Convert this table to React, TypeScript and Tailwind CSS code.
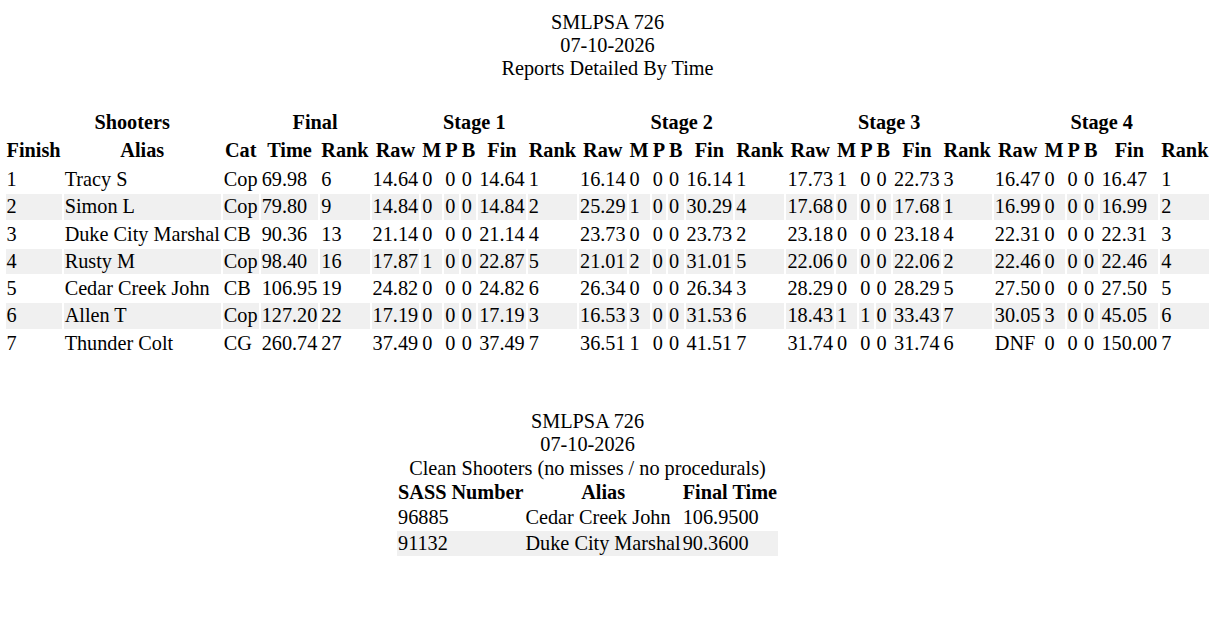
import React from 'react';

type Stage = [string, string, string, string, string, string];

type Shooter = {
  finish: string;
  alias: string;
  cat: string;
  time: string;
  rank: string;
  stages: Stage[];
};

const shooters: Shooter[] = [
  {
    finish: '1', alias: 'Tracy S', cat: 'Cop', time: '69.98', rank: '6',
    stages: [
      ['14.64', '0', '0', '0', '14.64', '1'],
      ['16.14', '0', '0', '0', '16.14', '1'],
      ['17.73', '1', '0', '0', '22.73', '3'],
      ['16.47', '0', '0', '0', '16.47', '1'],
    ],
  },
  {
    finish: '2', alias: 'Simon L', cat: 'Cop', time: '79.80', rank: '9',
    stages: [
      ['14.84', '0', '0', '0', '14.84', '2'],
      ['25.29', '1', '0', '0', '30.29', '4'],
      ['17.68', '0', '0', '0', '17.68', '1'],
      ['16.99', '0', '0', '0', '16.99', '2'],
    ],
  },
  {
    finish: '3', alias: 'Duke City Marshal', cat: 'CB', time: '90.36', rank: '13',
    stages: [
      ['21.14', '0', '0', '0', '21.14', '4'],
      ['23.73', '0', '0', '0', '23.73', '2'],
      ['23.18', '0', '0', '0', '23.18', '4'],
      ['22.31', '0', '0', '0', '22.31', '3'],
    ],
  },
  {
    finish: '4', alias: 'Rusty M', cat: 'Cop', time: '98.40', rank: '16',
    stages: [
      ['17.87', '1', '0', '0', '22.87', '5'],
      ['21.01', '2', '0', '0', '31.01', '5'],
      ['22.06', '0', '0', '0', '22.06', '2'],
      ['22.46', '0', '0', '0', '22.46', '4'],
    ],
  },
  {
    finish: '5', alias: 'Cedar Creek John', cat: 'CB', time: '106.95', rank: '19',
    stages: [
      ['24.82', '0', '0', '0', '24.82', '6'],
      ['26.34', '0', '0', '0', '26.34', '3'],
      ['28.29', '0', '0', '0', '28.29', '5'],
      ['27.50', '0', '0', '0', '27.50', '5'],
    ],
  },
  {
    finish: '6', alias: 'Allen T', cat: 'Cop', time: '127.20', rank: '22',
    stages: [
      ['17.19', '0', '0', '0', '17.19', '3'],
      ['16.53', '3', '0', '0', '31.53', '6'],
      ['18.43', '1', '1', '0', '33.43', '7'],
      ['30.05', '3', '0', '0', '45.05', '6'],
    ],
  },
  {
    finish: '7', alias: 'Thunder Colt', cat: 'CG', time: '260.74', rank: '27',
    stages: [
      ['37.49', '0', '0', '0', '37.49', '7'],
      ['36.51', '1', '0', '0', '41.51', '7'],
      ['31.74', '0', '0', '0', '31.74', '6'],
      ['DNF', '0', '0', '0', '150.00', '7'],
    ],
  },
];

const clean = [
  { sass: '96885', alias: 'Cedar Creek John', time: '106.9500' },
  { sass: '91132', alias: 'Duke City Marshal', time: '90.3600' },
];

const stageCols = ['Raw', 'M', 'P', 'B', 'Fin', 'Rank'];

export default function App() {
  return (
    <div className="w-[1215px] bg-white pt-[10.5px] text-[20.25px] leading-[23.3px] text-black font-['Liberation_Serif','Times_New_Roman',serif]">
      {/* Detailed report */}
      <div className="text-center">
        <div>SMLPSA 726</div>
        <div>07-10-2026</div>
        <div>Reports Detailed By Time</div>
      </div>

      <table className="mx-auto mt-[28px] border-separate border-spacing-[2px]">
        <thead>
          <tr>
            <th colSpan={3} className="p-px">Shooters</th>
            <th colSpan={2} className="p-px">Final</th>
            {[1, 2, 3, 4].map((n) => (
              <th key={n} colSpan={6} className="p-px">Stage {n}</th>
            ))}
          </tr>
          <tr>
            <th className="px-px pt-[1.5px] pb-[2.5px]">Finish</th>
            <th className="px-px pt-[1.5px] pb-[2.5px]">Alias</th>
            <th className="px-px pt-[1.5px] pb-[2.5px]">Cat</th>
            <th className="px-px pt-[1.5px] pb-[2.5px]">Time</th>
            <th className="px-px pt-[1.5px] pb-[2.5px]">Rank</th>
            {[1, 2, 3, 4].map((n) =>
              stageCols.map((c) => (
                <th key={`${n}-${c}`} className="px-px pt-[1.5px] pb-[2.5px]">{c}</th>
              ))
            )}
          </tr>
        </thead>
        <tbody>
          {shooters.map((s, i) => {
            const cell = i % 2 === 1 ? 'p-px text-left bg-[#f0f0f0]' : 'p-px text-left';
            return (
              <tr key={s.finish}>
                <td className={cell}>{s.finish}</td>
                <td className={`${cell} whitespace-nowrap`}>{s.alias}</td>
                <td className={cell}>{s.cat}</td>
                <td className={cell}>{s.time}</td>
                <td className={cell}>{s.rank}</td>
                {s.stages.map((st, si) =>
                  st.map((v, vi) => (
                    <td key={`${si}-${vi}`} className={cell}>{v}</td>
                  ))
                )}
              </tr>
            );
          })}
        </tbody>
      </table>

      {/* Clean shooters */}
      <div className="ml-[397px] mt-[52px] w-fit">
        <div className="text-center">
          <div>SMLPSA 726</div>
          <div>07-10-2026</div>
          <div>Clean Shooters (no misses / no procedurals)</div>
        </div>
        <table className="w-full border-collapse">
          <thead>
            <tr>
              <th className="p-px text-left whitespace-nowrap">SASS Number</th>
              <th className="p-px">Alias</th>
              <th className="p-px whitespace-nowrap">Final Time</th>
            </tr>
          </thead>
          <tbody>
            {clean.map((c, i) => (
              <tr key={c.sass} className={i % 2 === 1 ? 'bg-[#f0f0f0]' : ''}>
                <td className="p-px">{c.sass}</td>
                <td className="p-px whitespace-nowrap">{c.alias}</td>
                <td className="p-px">{c.time}</td>
              </tr>
            ))}
          </tbody>
        </table>
      </div>
      <div className="h-[79px]" />
    </div>
  );
}
